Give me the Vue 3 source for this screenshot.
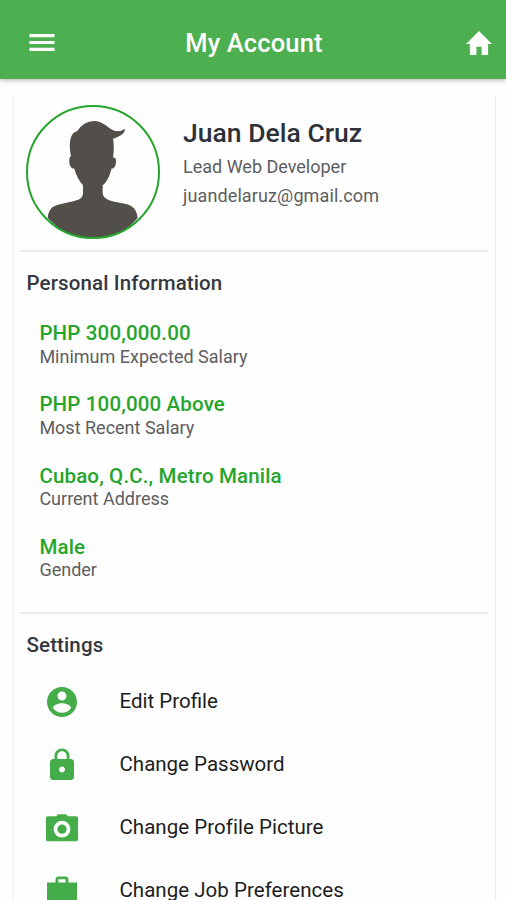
<script setup>
const facts = [
  { value: 'PHP 300,000.00', label: 'Minimum Expected Salary', key: 'expected' },
  { value: 'PHP 100,000 Above', label: 'Most Recent Salary', key: 'recent' },
  { value: 'Cubao, Q.C., Metro Manila', label: 'Current Address', key: 'address' },
  { value: 'Male', label: 'Gender', key: 'gender' },
]

const settings = [
  {
    label: 'Edit Profile',
    key: 'edit',
    icon: 'M12 2C6.48 2 2 6.48 2 12s4.48 10 10 10 10-4.48 10-10S17.52 2 12 2zm0 3c1.66 0 3 1.34 3 3s-1.34 3-3 3-3-1.34-3-3 1.34-3 3-3zm0 14.2c-2.5 0-4.71-1.28-6-3.22.03-1.99 4-3.08 6-3.08 1.99 0 5.97 1.09 6 3.08-1.29 1.94-3.5 3.22-6 3.22z',
  },
  {
    label: 'Change Password',
    key: 'password',
    icon: 'M18 8h-1V6c0-2.76-2.24-5-5-5S7 3.24 7 6v2H6c-1.1 0-2 .9-2 2v10c0 1.1.9 2 2 2h12c1.1 0 2-.9 2-2V10c0-1.1-.9-2-2-2zm-6 9c-1.1 0-2-.9-2-2s.9-2 2-2 2 .9 2 2-.9 2-2 2zm3.1-9H8.9V6c0-1.71 1.39-3.1 3.1-3.1 1.71 0 3.1 1.39 3.1 3.1v2z',
  },
  {
    label: 'Change Profile Picture',
    key: 'picture',
    icon: 'M9.2 2.9h5.6l1 1.2H21.4c.8 0 1.3.5 1.3 1.3v14.1c0 .8-.5 1.3-1.3 1.3H2.6c-.8 0-1.3-.5-1.3-1.3V5.4c0-.8.5-1.3 1.3-1.3h5.6zM12 7.2a5.6 5.6 0 1 0 0 11.2 5.6 5.6 0 0 0 0-11.2zm0 2.5a3.100 3.100 0 1 1 0 6.200 3.100 3.100 0 0 1 0-6.200z',
  },
  {
    label: 'Change Job Preferences',
    key: 'job',
    icon: 'M9.5 2.3h5c1 0 1.8.8 1.8 1.800V6.400H22v14c0 .6-.4 1-1 1H3c-.6 0-1-.4-1-1V6.400h5.700V4.100C7.700 3.100 8.500 2.300 9.500 2.300zm.1 1.900V6.400h4.800V4.200z',
  },
]
</script>

<template>
  <div class="screen">
    <header class="bar">
      <svg class="menu" viewBox="0 0 26 18" aria-hidden="true">
        <path d="M.5 0h25v3.2H.5zM.5 6.9h25v3.2H.5zM.5 13.8h25V17H.5z" />
      </svg>
      <h1 class="title">My Account</h1>
      <svg class="home" viewBox="2 3 20 17" preserveAspectRatio="none" aria-hidden="true">
        <path d="M10 20v-6h4v6h5v-8h3L12 3 2 12h3v8z" />
      </svg>
    </header>

    <main class="card">
      <section class="profile">
        <svg class="avatar" viewBox="48 45 402 402" aria-hidden="true">
          <defs>
            <clipPath id="portrait"><circle cx="249" cy="246" r="198" /></clipPath>
          </defs>
          <path
            clip-path="url(#portrait)"
            fill="#524f4a"
            d="M113 384C116 359 126 348 150 343L193 333C211 328 219 322 219 309V286C208 273 198 256 193 236C183 236 178 226 178 215C177 206 179 202 183 198C177 174 178 142 190 130C196 125 201 126 206 118C218 101 235 93 254 93C272 94 284 103 297 113C314 126 331 127 344 116C348 128 330 141 309 146C312 161 312 183 309 203C316 202 319 207 318 217C317 229 312 237 304 236C300 257 290 276 278 286V309C279 323 293 331 313 335L348 342C369 347 381 360 383 384C350 425 303 447 249 447S151 425 113 384Z"
          />
          <circle cx="249" cy="246" r="198" fill="none" stroke="#25a52b" stroke-width="6" />
        </svg>
        <div class="identity">
          <h2 class="name">Juan Dela Cruz</h2>
          <p class="detail role">Lead Web Developer</p>
          <p class="detail email">juandelaruz@gmail.com</p>
        </div>
      </section>

      <section class="information">
        <h3 class="heading">Personal Information</h3>
        <dl class="facts">
          <div v-for="fact in facts" :key="fact.key" class="fact" :class="fact.key">
            <dt>{{ fact.value }}</dt>
            <dd>{{ fact.label }}</dd>
          </div>
        </dl>
      </section>

      <section class="settings">
        <h3 class="heading">Settings</h3>
        <ul class="options">
          <li v-for="item in settings" :key="item.key" class="option" :class="item.key">
            <svg class="icon" viewBox="0 0 24 24" aria-hidden="true">
              <path fill-rule="evenodd" :d="item.icon" />
            </svg>
            <span>{{ item.label }}</span>
          </li>
        </ul>
      </section>
    </main>
  </div>
</template>

<style>
body {
  margin: 0;
  background: #fefefe;
}
</style>

<style scoped>
.screen {
  display: flex;
  flex-direction: column;
  height: 900px;
  overflow: hidden;
  background: #fefefe;
  font-family: Roboto, "Liberation Sans", sans-serif;
}

h1, h2, h3, p, dl, dd, ul {
  margin: 0;
  padding: 0;
}

.bar {
  display: flex;
  flex: none;
  align-items: center;
  box-sizing: border-box;
  height: 79px;
  padding: 7px 14px 0 28.5px;
  background: #4caf50;
  box-shadow: 0 1px 5px rgba(70, 40, 60, 0.4);
  fill: #fff;
}

.menu {
  width: 26px;
  height: 18px;
}

.title {
  margin: 0 auto 0 130.7px;
  color: #fff;
  font-size: 25.5px;
  font-weight: 500;
  letter-spacing: 0.15px;
  line-height: 30px;
  white-space: nowrap;
}

.home {
  width: 26px;
  height: 24.5px;
}

.card {
  flex: none;
  margin: 17px 10px 0 12px;
  padding: 0 7px 0 6px;
  border-right: 1.5px solid #eee;
  border-left: 2px solid #f4f4f4;
}

.profile {
  display: flex;
  gap: 23px;
  height: 145px;
  padding: 9px 0 0 6px;
}

.avatar {
  flex: none;
  width: 134px;
  height: 134px;
}

.identity {
  padding-top: 11px;
  white-space: nowrap;
}

.name {
  margin-bottom: 2px;
  color: #2e3138;
  font-size: 26.5px;
  font-weight: 500;
  letter-spacing: 0.02px;
  line-height: 34px;
}

.detail {
  color: #5d5d60;
  font-size: 18px;
  line-height: 29px;
}

.email {
  letter-spacing: 0.12px;
}

.information,
.settings {
  border-top: 2px solid #ededed;
}

.information {
  height: 360px;
}

.heading {
  padding: 19px 0 0 6.5px;
  color: #36383f;
  font-size: 20.5px;
  font-weight: 500;
  letter-spacing: 0.12px;
  line-height: 24px;
}

.facts {
  display: grid;
  gap: 25.3px;
  padding: 27px 0 0 19.4px;
}

.fact dt {
  color: #25a52b;
  font-size: 20.5px;
  font-weight: 500;
  letter-spacing: 0.15px;
  line-height: 22.5px;
}

.fact dd {
  color: #5d5d60;
  font-size: 18px;
  line-height: 23px;
  padding-bottom: 0.5px;
}

.options {
  padding-top: 12px;
  list-style: none;
}

.option {
  display: flex;
  align-items: center;
  gap: 39.5px;
  height: 63.1px;
  padding-left: 24px;
  color: #1d1d1d;
  font-size: 20.5px;
  white-space: nowrap;
}

.picture,
.job {
  letter-spacing: 0.03px;
}

.icon {
  flex: none;
  width: 36px;
  height: 36px;
  margin-top: 2px;
  fill: #44ad49;
}
</style>
